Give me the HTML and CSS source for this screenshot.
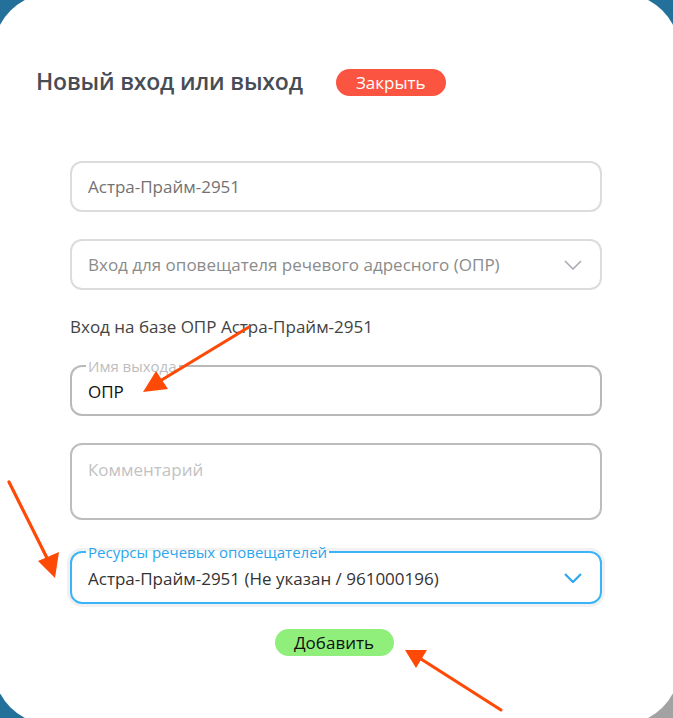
FILE: index.html
```html
<!DOCTYPE html>
<html lang="ru">
<head>
<meta charset="utf-8">
<title>Новый вход или выход</title>
<link rel="stylesheet" href="styles.css">
</head>
<body>
<div class="card">
  <div class="header">
    <h1 class="title">Новый вход или выход</h1>
    <button class="btn btn-close" type="button">Закрыть</button>
  </div>
  <form class="form">
    <div class="field field-input">
      <span class="value muted">Астра-Прайм-2951</span>
    </div>
    <div class="field field-select">
      <span class="value placeholder-dark">Вход для оповещателя речевого адресного (ОПР)</span>
      <svg class="chevron" width="18" height="10" viewBox="0 0 18 10"><path d="M1 1 L9 9 L17 1" fill="none" stroke="#a7acb3" stroke-width="1.6"/></svg>
    </div>
    <p class="note">Вход на базе ОПР Астра-Прайм-2951</p>
    <fieldset class="fs fs-gray">
      <legend>Имя выхода</legend>
      <span class="value dark">ОПР</span>
    </fieldset>
    <div class="field field-textarea">
      <span class="value placeholder">Комментарий</span>
    </div>
    <fieldset class="fs fs-blue">
      <legend>Ресурсы речевых оповещателей</legend>
      <span class="value dark2">Астра-Прайм-2951 (Не указан / 961000196)</span>
      <svg class="chevron" width="18" height="10" viewBox="0 0 18 10"><path d="M1 1 L9 9 L17 1" fill="none" stroke="#2fa8ee" stroke-width="2.2"/></svg>
    </fieldset>
    <div class="actions">
      <button class="btn btn-add" type="button">Добавить</button>
    </div>
  </form>
</div>
<svg class="arrows" width="673" height="718" viewBox="0 0 673 718">
  <g stroke="#ff4a07" stroke-width="3.2" fill="#ff4a07" stroke-linecap="round">
    <line x1="249" y1="327" x2="160" y2="381"/>
    <polygon points="143,392 156,371 168,389" stroke="none"/>
    <line x1="9" y1="482" x2="48" y2="560"/>
    <polygon points="55,578 38,561 59,552" stroke="none"/>
    <line x1="501" y1="710" x2="421" y2="659"/>
    <polygon points="405,650 427,650 416,668" stroke="none"/>
  </g>
</svg>
</body>
</html>
```
FILE: styles.css
```css
html, body {
  margin: 0;
  padding: 0;
}
body {
  width: 673px;
  height: 718px;
  overflow: hidden;
  position: relative;
  background: linear-gradient(135deg, #23719a 0%, #23719a 72%, #a2a2a2 72%, #a2a2a2 100%);
  font-family: "Open Sans", "Noto Sans", sans-serif;
}
.card {
  margin: -7px;
  width: 687px;
  height: 732px;
  box-sizing: border-box;
  background: #ffffff;
  border-radius: 60px;
  padding: 75px 0 0 0;
}
.header {
  display: flex;
  align-items: center;
  gap: 33px;
  padding-left: 43px;
}
.title {
  margin: -2px 0 0 0;
  font-size: 23px;
  font-weight: 600;
  color: #474c55;
  letter-spacing: -0.2px;
  line-height: 30px;
}
.btn {
  font-family: "Open Sans", "Noto Sans", sans-serif;
  border: none;
  border-radius: 14px;
  height: 27px;
  font-size: 17px;
  padding: 0;
  cursor: pointer;
}
.btn-close {
  background: #fb5541;
  color: #ffffff;
  width: 110px;
}
.form {
  margin: 65px 0 0 77px;
  width: 532px;
}
.field {
  box-sizing: border-box;
  border: 2px solid #dcdcdc;
  border-radius: 12px;
  height: 51px;
  display: flex;
  align-items: center;
  padding: 0 18px 0 16px;
  font-size: 17px;
}
.field-select {
  margin-top: 27px;
  justify-content: space-between;
}
.value {
  font-size: 17px;
}
.muted { color: #727272; }
.placeholder-dark { color: #8b8b8b; }
.placeholder { color: #c2c2c2; }
.dark { color: #111111; }
.dark2 { color: #333333; }
.note {
  margin: 26px 0 0 0;
  font-size: 17px;
  color: #434343;
  line-height: 22px;
}
.fs {
  margin: 20px 0 0 0;
  box-sizing: border-box;
  border-radius: 12px;
  padding: 0 18px 0 14px;
  height: 58px;
  display: flex;
  align-items: center;
  min-width: 0;
}
.fs legend {
  font-size: 15px;
  padding: 0 2px;
  line-height: 16px;
}
.fs-gray {
  border: 2px solid #b9b9b9;
}
.fs-gray legend { color: #bdbdbd; }
.field-textarea {
  margin-top: 27px;
  height: 77px;
  border-color: #bdbdbd;
  align-items: flex-start;
  padding-top: 13px;
}
.fs-blue {
  margin-top: 24px;
  height: 60px;
  border: 2px solid #3ab4f7;
  box-shadow: 0 0 0 3px #f1f1f1;
  justify-content: space-between;
}
.fs-blue legend { color: #2ba6ec; }
.fs .value {
  padding-left: 2px;
  margin-top: -6px;
}
.fs-blue .chevron { margin-top: -6px; }
.actions {
  display: flex;
  justify-content: center;
  margin-top: 25px;
}
.btn-add {
  background: #90ef7b;
  color: #111111;
  width: 119px;
  margin-left: -4px;
}
.arrows {
  position: absolute;
  left: 0;
  top: 0;
  pointer-events: none;
}
```
